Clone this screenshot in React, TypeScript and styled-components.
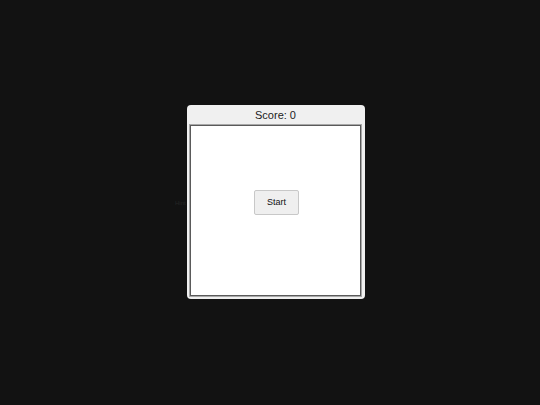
import styled, { createGlobalStyle } from "styled-components";

const GlobalStyle = createGlobalStyle`
  html, body {
    margin: 0;
    padding: 0;
    background: #121212;
    font-family: "Liberation Sans", Arial, sans-serif;
  }
`;

const Page = styled.div`
  width: 540px;
  height: 404px;
  display: flex;
  align-items: center;
  justify-content: center;
`;

const Hint = styled.span`
  font-size: 6px;
  color: #262626;
  width: 12px;
  white-space: nowrap;
  margin-top: 2px;
`;

const Panel = styled.div`
  width: 178px;
  height: 194px;
  box-sizing: border-box;
  background: #f0f0f0;
  border-radius: 4px;
  padding: 0 4px 3px 3px;
  display: flex;
  flex-direction: column;
`;

const Header = styled.div`
  height: 20px;
  display: flex;
  align-items: center;
  justify-content: center;
  font-size: 11px;
  color: #222;
`;

const Board = styled.div`
  flex: 1;
  background: #fff;
  border: 1px solid #5a5a5a;
  box-shadow: 0 0 0 1px #a8a8a8;
  display: flex;
  align-items: center;
  justify-content: center;
`;

const StartButton = styled.button`
  width: 45px;
  height: 25px;
  margin: 0 0 17px 2px;
  font-family: "Liberation Sans", Arial, sans-serif;
  font-size: 9px;
  color: #111;
  background: #efefef;
  border: 1px solid #c8c8c8;
  border-radius: 2px;
`;

export default function App() {
  return (
    <>
      <GlobalStyle />
      <Page>
        <Hint>Hint</Hint>
        <Panel>
          <Header>Score: 0</Header>
          <Board>
            <StartButton>Start</StartButton>
          </Board>
        </Panel>
      </Page>
    </>
  );
}
